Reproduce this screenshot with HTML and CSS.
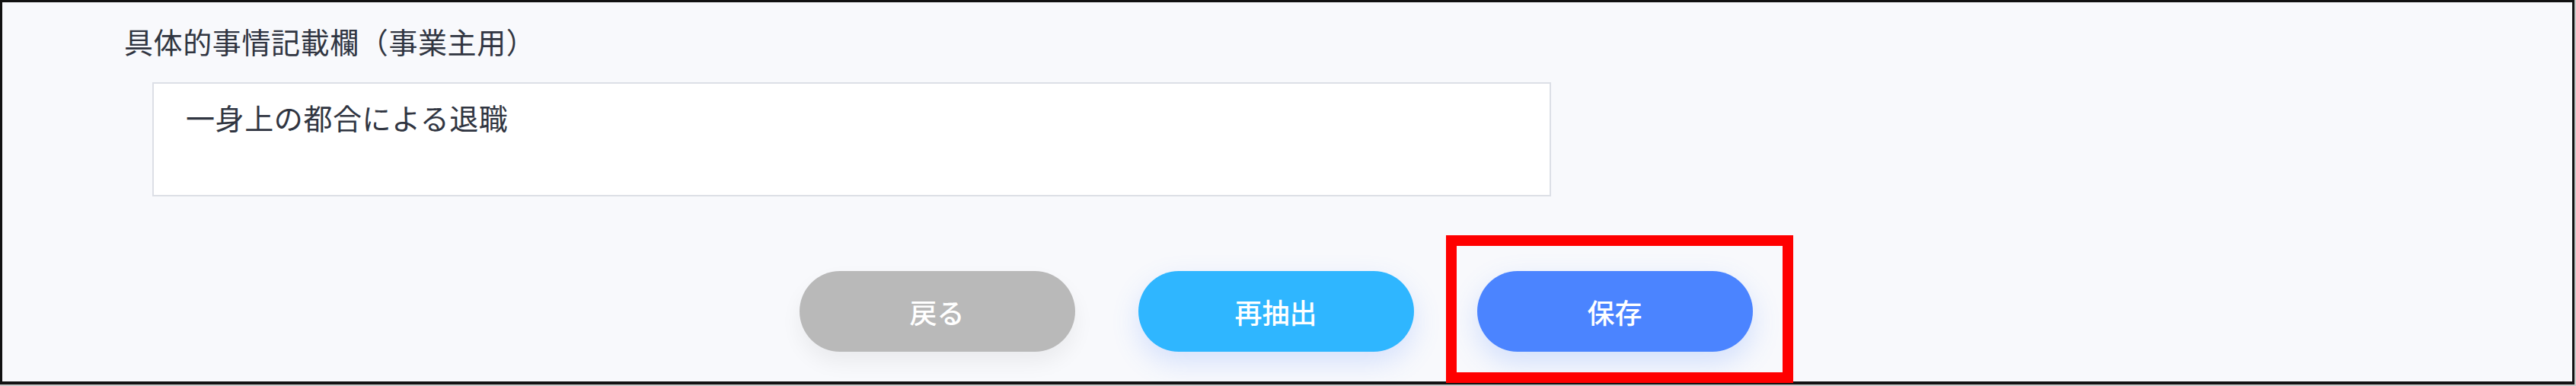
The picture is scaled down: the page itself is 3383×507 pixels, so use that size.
FILE: index.html
```html
<!DOCTYPE html>
<html lang="ja">
<head>
<meta charset="utf-8">
<title>具体的事情記載欄</title>
<link rel="stylesheet" href="styles.css">
</head>
<body>
<div class="frame">
  <div class="field">
    <div class="label">具体的事情記載欄（事業主用）</div>
    <textarea class="memo" readonly>一身上の都合による退職</textarea>
  </div>
  <div class="actions">
    <button class="btn btn-back" type="button">戻る</button>
    <button class="btn btn-extract" type="button">再抽出</button>
    <button class="btn btn-save" type="button">保存</button>
  </div>
  <div class="highlight"></div>
</div>
</body>
</html>
```
FILE: styles.css
```css
html, body {
  margin: 0;
  padding: 0;
}
body {
  background: #c9c9c9;
  width: 3383px;
  height: 507px;
  font-family: "Noto Sans CJK JP", "Noto Sans", sans-serif;
}
.frame {
  position: relative;
  box-sizing: border-box;
  width: 3381px;
  height: 505px;
  border: 3px solid #121212;
  border-bottom-width: 4px;
  background: #f8f9fc;
  padding-top: 26px;
}
.field {
  display: flex;
  flex-direction: column;
}
.label {
  margin-left: 160px;
  font-size: 38px;
  letter-spacing: 0.6px;
  line-height: 50px;
  color: #303541;
}
.memo {
  display: block;
  box-sizing: border-box;
  margin: 29px 0 0 197px;
  width: 1837px;
  height: 150px;
  border: 2px solid #dcdfe6;
  background: #ffffff;
  padding: 19px 42px;
  font-family: inherit;
  font-size: 38px;
  letter-spacing: 0.6px;
  line-height: 50px;
  color: #303541;
  resize: none;
  outline: none;
}
.actions {
  display: flex;
  justify-content: center;
  gap: 83px;
  margin-top: 98px;
  padding-right: 30px;
}
.btn {
  width: 362px;
  height: 106px;
  border: none;
  border-radius: 53px;
  font-family: inherit;
  font-size: 36px;
  font-weight: 500;
  color: #ffffff;
  padding: 0;
}
.btn-back {
  background: #b9b9b9;
  box-shadow: 0 14px 28px rgba(0, 0, 0, 0.06);
}
.btn-extract {
  background: #2fb6ff;
  box-shadow: 0 14px 36px rgba(74, 132, 255, 0.2);
}
.btn-save {
  background: #4b84ff;
  box-shadow: 0 14px 36px rgba(74, 132, 255, 0.22);
}
.highlight {
  position: absolute;
  left: 1896px;
  top: 306px;
  width: 456px;
  height: 194px;
  box-sizing: border-box;
  border: 14px solid #ff0000;
}
```
